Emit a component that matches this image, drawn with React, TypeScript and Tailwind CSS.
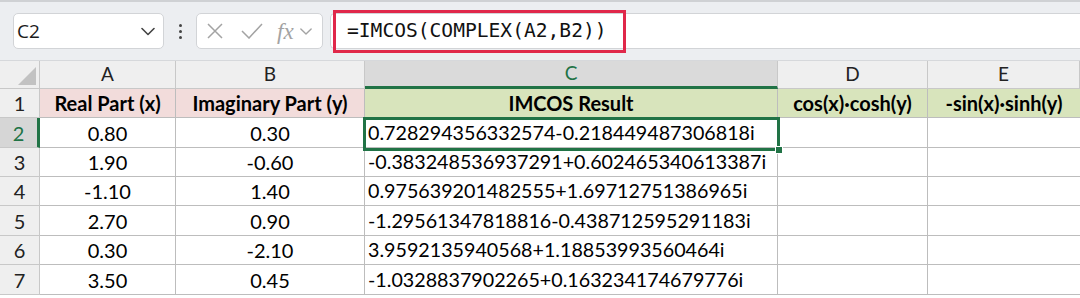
import React from "react";

const cols = "grid-cols-[40px_136px_189px_413px_150px_152px]";
const rowH = ["h-[29px]", "h-[30px]", "h-[29px]", "h-[29px]", "h-[30px]", "h-[29px]", "h-[30px]"];

const data: [string, string, string][] = [
  ["0.80", "0.30", "0.728294356332574-0.218449487306818i"],
  ["1.90", "-0.60", "-0.383248536937291+0.602465340613387i"],
  ["-1.10", "1.40", "0.975639201482555+1.69712751386965i"],
  ["2.70", "0.90", "-1.29561347818816-0.438712595291183i"],
  ["0.30", "-2.10", "3.9592135940568+1.18853993560464i"],
  ["3.50", "0.45", "-1.0328837902265+0.163234174679776i"],
];

const cellFont = { fontFamily: "Lato, 'Open Sans', sans-serif" };

function Chevron({ className }: { className?: string }) {
  return (
    <svg className={className} width="14" height="9" viewBox="0 0 14 9" fill="none">
      <path d="M1 1.5 L7 7.5 L13 1.5" stroke="currentColor" strokeWidth="1.6" strokeLinecap="round" strokeLinejoin="round" />
    </svg>
  );
}

export default function App() {
  return (
    <div className="w-[1080px] h-[298px] overflow-hidden bg-white" style={cellFont}>
      {/* Toolbar */}
      <div className="h-[61px] bg-[#eceef1] border-t-2 border-[#cfd1d4] border-b border-b-[#d6d8db] flex items-center">
        <div className="ml-[13px] w-[151px] h-[36px] bg-white border border-[#d2d4d7] rounded-[5px] flex items-center justify-between pl-[3px] pr-[8px]">
          <span className="text-[19px] text-[#1b1b1b]" style={{ fontFamily: "'Open Sans', sans-serif" }}>C2</span>
          <Chevron className="text-[#444]" />
        </div>
        <div className="w-[32px] flex flex-col items-center gap-[3px]">
          <span className="w-[3px] h-[3px] rounded-full bg-[#444]" />
          <span className="w-[3px] h-[3px] rounded-full bg-[#444]" />
          <span className="w-[3px] h-[3px] rounded-full bg-[#444]" />
        </div>
        <div className="w-[127px] h-[36px] bg-white border border-[#d2d4d7] rounded-[5px] flex items-center pl-[9px] text-[#a3a3a3]">
          <svg width="18" height="18" viewBox="0 0 18 18" fill="none">
            <path d="M2 2 L16 16 M16 2 L2 16" stroke="currentColor" strokeWidth="1.5" />
          </svg>
          <svg className="ml-[17px]" width="22" height="16" viewBox="0 0 22 16" fill="none">
            <path d="M1 8 L8 15 L21 1" stroke="currentColor" strokeWidth="1.5" />
          </svg>
          <span className="ml-[14px] text-[23px] italic leading-none" style={{ fontFamily: "'Liberation Serif', serif" }}>fx</span>
          <Chevron className="ml-[6px] w-[12px]" />
        </div>
        <div className="ml-[7px] flex-1 h-[36px] bg-white border-y border-l border-[#d2d4d7] rounded-l-[5px] relative flex items-center">
          <span className="pl-[16px] text-[19.6px] text-[#111]" style={{ fontFamily: "'DejaVu Sans Mono', monospace" }}>
            =IMCOS(COMPLEX(A2,B2))
          </span>
          <div className="absolute left-[2px] top-[-4px] w-[293px] h-[43px] border-[3px] border-[#e0284a]" />
        </div>
      </div>

      {/* Grid */}
      <div className="relative">
        <div className={`grid ${cols}`}>
          {/* column headers */}
          <div className="h-[28px] bg-[#efefef] border-r border-b border-[#c8c8c8] relative">
            <svg className="absolute right-[3px] bottom-[3px]" width="18" height="18" viewBox="0 0 18 18">
              <path d="M18 0 L18 18 L0 18 Z" fill="#c2c2c2" />
            </svg>
          </div>
          {["A", "B"].map((c) => (
            <div key={c} className="h-[28px] bg-[#efefef] border-r border-b border-[#c8c8c8] flex items-center justify-center text-[19px] text-[#222]">
              {c}
            </div>
          ))}
          <div className="h-[28px] bg-[#dadada] border-r border-[#c8c8c8] border-b-[3px] border-b-[#217346] flex items-center justify-center text-[19px] text-[#217346]">
            C
          </div>
          {["D", "E"].map((c) => (
            <div key={c} className="h-[28px] bg-[#efefef] border-r border-b border-[#c8c8c8] flex items-center justify-center text-[19px] text-[#222]">
              {c}
            </div>
          ))}

          {/* row 1 */}
          <div className={`${rowH[0]} bg-[#efefef] border-r border-b border-[#c8c8c8] flex items-center justify-center text-[20px] text-[#222]`}>1</div>
          <div className={`${rowH[0]} bg-[#f2dcdb] border-r border-b border-[#bdbdbd] flex items-center justify-center text-[20px] font-bold text-black`}>Real Part (x)</div>
          <div className={`${rowH[0]} bg-[#f2dcdb] border-r border-b border-[#bdbdbd] flex items-center justify-center text-[20px] font-bold text-black`}>Imaginary Part (y)</div>
          <div className={`${rowH[0]} bg-[#d8e4bc] border-r border-b border-[#bdbdbd] flex items-center justify-center text-[20px] font-bold text-black`}>IMCOS Result</div>
          <div className={`${rowH[0]} bg-[#d8e4bc] border-r border-b border-[#bdbdbd] flex items-center justify-center text-[20px] font-bold text-black`}>cos(x)·cosh(y)</div>
          <div className={`${rowH[0]} bg-[#d8e4bc] border-b border-[#bdbdbd] flex items-center justify-center text-[20px] font-bold text-black`}>-sin(x)·sinh(y)</div>

          {data.map((r, i) => {
            const h = rowH[i + 1];
            const sel = i === 0;
            return (
              <React.Fragment key={i}>
                <div
                  className={`${h} border-b border-[#c8c8c8] flex items-center justify-center text-[20px] ${
                    sel ? "bg-[#d6d6d6] text-[#217346] border-r-[3px] border-r-[#217346]" : "bg-[#efefef] text-[#222] border-r"
                  }`}
                >
                  {i + 2}
                </div>
                <div className={`${h} border-r border-b border-[#bdbdbd] flex items-center justify-center text-[20px] text-black`}>{r[0]}</div>
                <div className={`${h} border-r border-b border-[#bdbdbd] flex items-center justify-center text-[20px] text-black`}>{r[1]}</div>
                <div className={`${h} border-r border-b border-[#bdbdbd] flex items-center pl-[3px] text-[19.7px] text-black whitespace-nowrap`}>{r[2]}</div>
                <div className={`${h} border-r border-b border-[#bdbdbd]`} />
                <div className={`${h} border-b border-[#bdbdbd]`} />
              </React.Fragment>
            );
          })}
        </div>
        {/* selection box on C2 */}
        <div className="absolute left-[363px] top-[56px] w-[417px] h-[34px] border-[3px] border-[#217346] pointer-events-none" />
        <div className="absolute left-[775px] top-[85px] w-[8px] h-[8px] bg-[#217346] border border-white pointer-events-none" />
      </div>
    </div>
  );
}
